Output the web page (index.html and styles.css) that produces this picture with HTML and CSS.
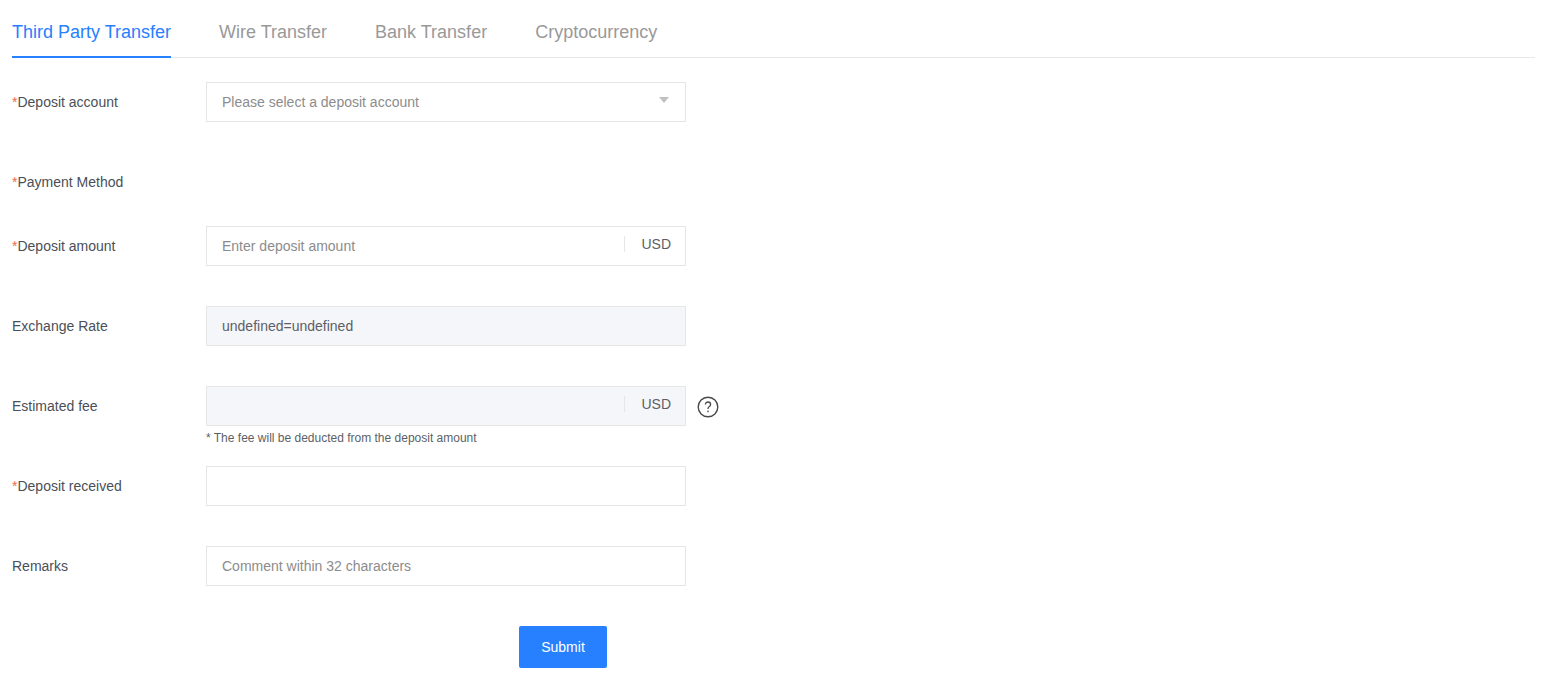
FILE: index.html
```html
<!DOCTYPE html>
<html>
<head>
<meta charset="utf-8">
<title>Deposit</title>
<link rel="stylesheet" href="styles.css">
</head>
<body>
<div class="container">
    <div class="tabs">
        <div class="tab active">Third Party Transfer</div>
        <div class="tab">Wire Transfer</div>
        <div class="tab">Bank Transfer</div>
        <div class="tab">Cryptocurrency</div>
    </div>

    <div class="form">
        <div class="form-group">
            <label class="label"><span class="star">*</span>Deposit account</label>
            <div class="field">
                <span class="placeholder">Please select a deposit account</span>
                <span class="arrow"></span>
            </div>
        </div>
        <div class="form-group group-short">
            <label class="label"><span class="star">*</span>Payment Method</label>
        </div>
        <div class="form-group">
            <label class="label"><span class="star">*</span>Deposit amount</label>
            <div class="field">
                <span class="placeholder">Enter deposit amount</span>
                <span class="unit">USD</span>
            </div>
        </div>
        <div class="form-group">
            <label class="label">Exchange Rate</label>
            <div class="field disabled">undefined=undefined</div>
        </div>
        <div class="form-group">
            <label class="label">Estimated fee</label>
            <div class="field disabled">
                <span class="unit">USD</span>
                <p class="tip">* The fee will be deducted from the deposit amount</p>
            </div>
            <svg class="help" width="22" height="22" viewBox="0 0 22 22">
                <circle cx="11" cy="11" r="9.8" fill="none" stroke="#4a4a4a" stroke-width="1.4"/>
                <path d="M8.4 8.6c0-1.6 1.1-2.6 2.6-2.6s2.6 1 2.6 2.4c0 1-.5 1.6-1.3 2.2-.9.7-1.3 1.2-1.3 2.3" fill="none" stroke="#4a4a4a" stroke-width="1.3"/>
                <rect x="10.3" y="14.6" width="1.4" height="1.6" fill="#4a4a4a"/>
            </svg>
        </div>
        <div class="form-group">
            <label class="label"><span class="star">*</span>Deposit received</label>
            <div class="field"></div>
        </div>
        <div class="form-group">
            <label class="label">Remarks</label>
            <div class="field">
                <span class="placeholder">Comment within 32 characters</span>
            </div>
        </div>
        <div class="actions">
            <button class="btn">Submit</button>
        </div>
    </div>
</div>
</body>
</html>
```

FILE: styles.css
```css
body {
    margin: 0;
    background-color: #fff;
    font-family: "Liberation Sans", Arial, sans-serif;
    font-size: 14px;
    color: #4a4f57;
}

.container {
    padding: 0 10px 0 12px;
}

.tabs {
    display: flex;
    gap: 48px;
    height: 57px;
    border-bottom: 1px solid #e8e8e8;
}

.tab {
    height: 58px;
    box-sizing: border-box;
    padding-top: 22px;
    font-size: 18px;
    line-height: 21px;
    color: #999;
}

.tab.active {
    color: #2680ff;
    border-bottom: 2px solid #2680ff;
}

.form {
    padding-top: 24px;
}

.form-group {
    display: flex;
    align-items: center;
    height: 40px;
    margin-bottom: 40px;
}

.group-short {
    margin-bottom: 24px;
}

.label {
    width: 194px;
    flex-shrink: 0;
    color: #4a4f57;
}

.star {
    color: #e8694a;
}

.field {
    position: relative;
    display: flex;
    align-items: center;
    width: 480px;
    height: 40px;
    box-sizing: border-box;
    padding: 0 15px;
    border: 1px solid #e6e6e6;
    color: #5c5f66;
}

.field.disabled {
    background-color: #f5f6fa;
}

.placeholder {
    color: #8c8c8c;
}

.arrow {
    position: absolute;
    top: 14px;
    right: 16px;
    border-left: 5px solid transparent;
    border-right: 5px solid transparent;
    border-top: 6px solid #c0c0c0;
}

.unit {
    position: absolute;
    top: 9px;
    right: 0;
    width: 61px;
    height: 16px;
    border-left: 1px solid #e6e6e6;
    padding-right: 14px;
    box-sizing: border-box;
    line-height: 16px;
    text-align: right;
    color: #5c5f66;
}

.tip {
    position: absolute;
    top: 43px;
    left: -1px;
    margin: 0;
    font-size: 12px;
    line-height: 16px;
    white-space: nowrap;
    color: #5c5f66;
}

.help {
    margin: 2px 0 0 11px;
}

.actions {
    width: 1102px;
    text-align: center;
}

.btn {
    width: 88px;
    height: 42px;
    background-color: #2680ff;
    color: white;
    border: none;
    border-radius: 2px;
    font-family: inherit;
    font-size: 14px;
    cursor: pointer;
}
```
